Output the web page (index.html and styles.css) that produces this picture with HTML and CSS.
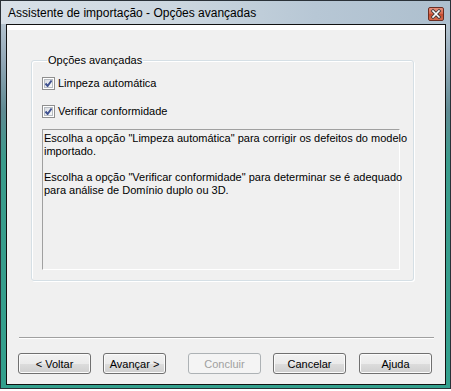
FILE: index.html
```html
<!DOCTYPE html>
<html lang="pt">
<head>
    <meta charset="UTF-8">
    <title>Assistente de importação - Opções avançadas</title>
    <link rel="stylesheet" href="styles.css">
</head>
<body>

    <div class="window">
        <div class="titlebar">
            <span class="title">Assistente de importação - Opções avançadas</span>
            <span class="close-btn">
                <svg width="16" height="14" viewBox="0 0 16 14">
                    <path d="M5 4 L11 10 M11 4 L5 10" stroke="#3a3a3a" stroke-width="3.2" stroke-linecap="square"/>
                    <path d="M5 4 L11 10 M11 4 L5 10" stroke="#fff" stroke-width="1.6" stroke-linecap="square"/>
                </svg>
            </span>
        </div>

        <div class="client">
            <fieldset class="group">
                <legend>Opções avançadas</legend>

                <label class="check first">
                    <span class="box"><svg width="9" height="9" viewBox="0 0 9 9"><path d="M1.5 4.5 L3.6 7 L7.6 1.5" fill="none" stroke="#3f5190" stroke-width="2"/></svg></span>
                    Limpeza automática
                </label>
                <label class="check">
                    <span class="box"><svg width="9" height="9" viewBox="0 0 9 9"><path d="M1.5 4.5 L3.6 7 L7.6 1.5" fill="none" stroke="#3f5190" stroke-width="2"/></svg></span>
                    Verificar conformidade
                </label>

                <div class="info">
                    <p>Escolha a opção "Limpeza automática" para corrigir os defeitos do modelo<br>importado.</p>
                    <p>Escolha a opção "Verificar conformidade" para determinar se é adequado<br>para análise de Domínio duplo ou 3D.</p>
                </div>
            </fieldset>

            <div class="separator"></div>

            <div class="buttons">
                <button class="btn">&lt; Voltar</button>
                <button class="btn narrow">Avançar &gt;</button>
                <button class="btn" disabled>Concluir</button>
                <button class="btn">Cancelar</button>
                <button class="btn last">Ajuda</button>
            </div>
        </div>
    </div>

</body>
</html>
```

FILE: styles.css
```css
* {
    box-sizing: border-box;
}

body {
    margin: 0;
    background: #fff;
    font-family: "Liberation Sans", Arial, sans-serif;
    font-size: 11px;
    color: #000;
}

/* Window frame (Vista basic look) */
.window {
    width: 451px;
    height: 389px;
    border: 1px solid #2a3138;
    padding: 0 4px 3px 5px;
    display: flex;
    flex-direction: column;
    background: linear-gradient(to bottom, #c7d3dd 0, #93a8b7 60px, #5f8a92 110px, #3a9b8b 160px, #33a08d 100%);
}

.titlebar {
    height: 23px;
    margin: 0 -4px 0 -5px;
    padding: 0 6px 0 7px;
    display: flex;
    align-items: center;
    justify-content: space-between;
    background: linear-gradient(to right, #d9e1e8 0%, #cbd6df 40%, #b7c7d5 70%, #adbfce 100%);
}

.title {
    font-size: 12px;
    color: #000;
    padding-top: 1px;
}

.close-btn {
    width: 16px;
    height: 14px;
    margin-top: 3px;
    border: 1px solid #6b2d22;
    border-radius: 2px;
    background: linear-gradient(to bottom, #e6907c 0%, #d86a50 45%, #c24b30 55%, #d76c4d 100%);
    display: flex;
    align-items: center;
    justify-content: center;
}

.close-btn svg {
    margin: -1px;
}

/* Client area of the dialog */
.client {
    flex: 1;
    border: 1px solid #111;
    background: linear-gradient(to bottom, #fff 0, #fff 5px, #f0f0f0 5px);
    display: flex;
    flex-direction: column;
}

.group {
    margin: 28px 0 0 24px;
    width: 383px;
    padding: 0 13px 10px 10px;
    border: 1px solid #d5dfe5;
    border-radius: 3px;
    box-shadow: 1px 1px 0 #fff, inset 1px 1px 0 #fff;
    min-width: 0;
}

.group legend {
    margin-left: 5px;
    padding: 0 1px;
    line-height: 14px;
    color: #000;
}

.check {
    display: flex;
    align-items: center;
    height: 13px;
    margin-top: 15px;
    line-height: 13px;
}

.check.first {
    margin-top: 10px;
}

.box {
    width: 13px;
    height: 13px;
    margin-right: 3px;
    border: 1px solid #8f8f8f;
    background: #fff;
    padding: 1px;
    display: flex;
}

.box svg {
    width: 9px;
    height: 9px;
    background: linear-gradient(135deg, #d6d9de 0%, #eef0f2 60%, #fbfbfb 100%);
    outline: 1px solid #b7bcc2;
    outline-offset: -1px;
}

.info {
    margin-top: 11px;
    width: 358px;
    height: 141px;
    border-top: 1px solid #a0a0a0;
    border-left: 1px solid #a0a0a0;
    border-right: 1px solid #fff;
    border-bottom: 1px solid #fff;
    padding: 2px 0 0 1px;
    line-height: 13px;
    white-space: nowrap;
}

.info p {
    margin: 0 0 13px 0;
}

/* Bottom separator and wizard buttons */
.separator {
    margin: auto 11px 0 12px;
    height: 2px;
    border-top: 1px solid #a0a0a0;
    border-bottom: 1px solid #fff;
}

.buttons {
    display: flex;
    padding: 14px 0 10px 11px;
}

.btn {
    width: 73px;
    height: 21px;
    margin-right: 12px;
    padding: 0;
    font-family: "Liberation Sans", Arial, sans-serif;
    font-size: 11px;
    color: #000;
    border: 1px solid #707070;
    border-radius: 3px;
    background: linear-gradient(to bottom, #f2f2f2 0%, #ebebeb 50%, #dddddd 51%, #cfcfcf 100%);
    box-shadow: inset 0 0 0 1px #fbfbfb;
}

.btn.narrow {
    width: 63px;
    margin-right: 22px;
}

.btn.last {
    margin-left: 1px;
    margin-right: 0;
}

.btn:disabled {
    color: #a0a0a0;
    border-color: #adb2b5;
    background: #f4f4f4;
    box-shadow: none;
}
```
